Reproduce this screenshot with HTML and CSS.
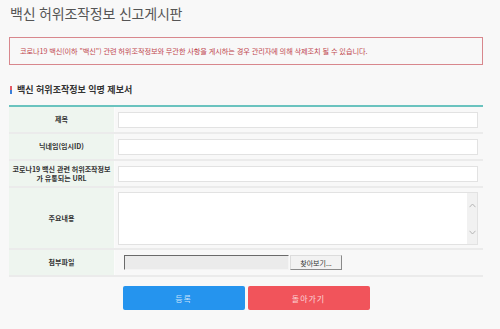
FILE: index.html
```html
<!DOCTYPE html>
<html lang="ko">
<head>
<meta charset="utf-8">
<title>백신 허위조작정보 신고게시판</title>
<link rel="stylesheet" href="styles.css">
</head>
<body>
<div class="page">
  <h1 class="title">백신 허위조작정보 신고게시판</h1>
  <div class="notice">코로나19 백신(이하 "백신") 관련 허위조작정보와 무관한 사항을 게시하는 경우 관리자에 의해 삭제조치 될 수 있습니다.</div>
  <h2 class="section"><span class="marker"></span>백신 허위조작정보 익명 제보서</h2>
  <div class="form">
    <div class="row">
      <div class="label">제목</div>
      <div class="cell"><input class="text" type="text"></div>
    </div>
    <div class="row">
      <div class="label">닉네임(임시ID)</div>
      <div class="cell"><input class="text" type="text"></div>
    </div>
    <div class="row">
      <div class="label">코로나19 백신 관련 허위조작정보<br>가 유통되는 URL</div>
      <div class="cell"><input class="text" type="text"></div>
    </div>
    <div class="row row-tall">
      <div class="label">주요내용</div>
      <div class="cell cell-top">
        <div class="area">
          <textarea class="area-input"></textarea>
          <div class="scrollbar">
            <svg width="7" height="5" viewBox="0 0 7 5"><path d="M0.5 4.2 L3.5 1 L6.5 4.2" fill="none" stroke="#b5b5b5" stroke-width="1"/></svg>
            <svg width="7" height="5" viewBox="0 0 7 5"><path d="M0.5 0.8 L3.5 4 L6.5 0.8" fill="none" stroke="#b5b5b5" stroke-width="1"/></svg>
          </div>
        </div>
      </div>
    </div>
    <div class="row">
      <div class="label">첨부파일</div>
      <div class="cell">
        <div class="file">
          <span class="file-name"></span>
          <span class="file-btn">찾아보기...</span>
        </div>
      </div>
    </div>
  </div>
  <div class="actions">
    <button class="btn btn-blue" type="button">등록</button>
    <button class="btn btn-red" type="button">돌아가기</button>
  </div>
</div>
</body>
</html>
```
FILE: styles.css
```css
html, body {
  margin: 0;
  padding: 0;
  background: #f8f8f8;
}
body {
  font-family: "Noto Sans CJK KR", "Noto Sans", sans-serif;
  color: #333;
}
.page {
  width: 474px;
  margin-left: 9px;
  padding-top: 3px;
}
.title {
  margin: 0 0 0 1px;
  font-size: 14px;
  line-height: 20px;
  font-weight: normal;
  color: #555;
  letter-spacing: -0.2px;
}
.notice {
  margin-top: 14px;
  height: 26px;
  border: 1px solid #d8878d;
  display: flex;
  align-items: center;
  padding-left: 10px;
  font-size: 7.2px;
  color: #c0474f;
  letter-spacing: -0.1px;
}
.section {
  margin: 18px 0 8px 1px;
  display: flex;
  align-items: center;
  font-size: 9px;
  line-height: 14px;
  font-weight: bold;
  color: #333;
}
.marker {
  width: 2px;
  height: 8px;
  margin-right: 5px;
  background: linear-gradient(#e45a66 0 45%, #3b7fd9 45% 100%);
}
.form {
  border-top: 2px solid #6ac3bf;
}
.row {
  display: grid;
  grid-template-columns: 106px 1fr;
  height: 25px;
  border-bottom: 2px solid #ebebeb;
}
.row-tall {
  height: 60px;
}
.label {
  background: #eef5ef;
  border-right: 1px solid #fbfbfb;
  display: flex;
  align-items: center;
  justify-content: center;
  text-align: center;
  font-size: 7px;
  line-height: 9px;
  font-weight: bold;
  color: #333;
}
.cell {
  display: flex;
  align-items: center;
  padding: 0 5px 0 3px;
}
.cell-top {
  align-items: flex-start;
  padding-top: 4px;
}
.text {
  box-sizing: border-box;
  width: 100%;
  height: 16px;
  margin: 0;
  border: 1px solid #e2e2e2;
  background: #fff;
  padding: 0 4px;
  font: inherit;
  font-size: 7px;
  outline: none;
}
.area {
  box-sizing: border-box;
  width: 100%;
  height: 53px;
  display: flex;
  border: 1px solid #e2e2e2;
  background: #fff;
}
.area-input {
  flex: 1;
  border: 0;
  margin: 0;
  padding: 2px 4px;
  resize: none;
  outline: none;
  background: #fff;
  font: inherit;
  font-size: 7px;
}
.scrollbar {
  width: 10px;
  background: #f1f1f1;
  display: flex;
  flex-direction: column;
  align-items: center;
  justify-content: space-between;
  padding: 10px 0 9px;
}
.file {
  display: flex;
  align-items: center;
  margin-left: 6px;
  height: 15px;
}
.file-name {
  box-sizing: border-box;
  width: 165px;
  height: 15px;
  background: #ebebeb;
  border-top: 1px solid #6a6a6a;
  border-left: 1px solid #6a6a6a;
  border-right: 1px solid #f4f4f4;
  border-bottom: 1px solid #f4f4f4;
}
.file-btn {
  box-sizing: border-box;
  height: 15px;
  width: 52px;
  margin-left: 1px;
  background: #f2f2f2;
  border: 1px solid #dcdcdc;
  border-right-color: #8a8a8a;
  border-bottom-color: #8a8a8a;
  display: flex;
  align-items: center;
  justify-content: center;
  font-size: 7px;
  color: #333;
}
.actions {
  display: flex;
  justify-content: center;
  gap: 3px;
  margin-top: 9px;
}
.btn {
  width: 122px;
  height: 24px;
  border: 0;
  border-radius: 2px;
  font-family: inherit;
  font-size: 8px;
  letter-spacing: 1px;
  color: rgba(255, 255, 255, 0.75);
  padding: 0;
}
.btn-blue {
  background: #2594ee;
}
.btn-red {
  background: #f1545b;
}
```
